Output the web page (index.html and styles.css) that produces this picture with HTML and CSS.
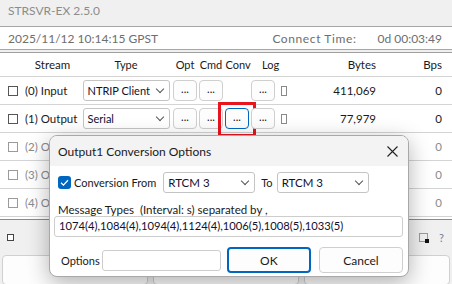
FILE: index.html
```html
<!DOCTYPE html>
<html lang="en">
<head>
    <meta charset="UTF-8">
    <title>STRSVR-EX 2.5.0</title>
    <link rel="stylesheet" href="styles.css">
</head>
<body>

<div class="app">
    <div class="titlebar">STRSVR-EX 2.5.0</div>

    <div class="status">
        <span class="clock">2025/11/12 10:14:15 GPST</span>
        <span class="conn-label">Connect Time:</span>
        <span class="conn-time">0d 00:03:49</span>
    </div>

    <div class="streams">
        <div class="row head">
            <span class="c-check"></span>
            <span class="c-name">Stream</span>
            <span class="c-type">Type</span>
            <span class="c-btn">Opt</span>
            <span class="c-btn">Cmd</span>
            <span class="c-btn">Conv</span>
            <span class="c-btn c-log">Log</span>
            <span class="c-ind"></span>
            <span class="c-bytes">Bytes</span>
            <span class="c-bps">Bps</span>
        </div>

        <div class="row">
            <span class="c-check"><span class="box"></span></span>
            <span class="c-name">(0) Input</span>
            <span class="c-type"><span class="select">NTRIP Client<i class="chev"></i></span></span>
            <span class="c-btn"><button class="dots">...</button></span>
            <span class="c-btn"><button class="dots">...</button></span>
            <span class="c-btn"></span>
            <span class="c-btn"><button class="dots">...</button></span>
            <span class="c-ind"><span class="led"></span></span>
            <span class="c-bytes">411,069</span>
            <span class="c-bps">0</span>
        </div>

        <div class="row">
            <span class="c-check"><span class="box"></span></span>
            <span class="c-name">(1) Output</span>
            <span class="c-type"><span class="select">Serial<i class="chev"></i></span></span>
            <span class="c-btn"><button class="dots">...</button></span>
            <span class="c-btn"><button class="dots">...</button></span>
            <span class="c-btn"><button class="dots focus">...</button><span class="redbox"></span></span>
            <span class="c-btn"><button class="dots">...</button></span>
            <span class="c-ind"><span class="led"></span></span>
            <span class="c-bytes">77,979</span>
            <span class="c-bps">0</span>
        </div>

        <!-- rows 2-4 sit mostly under the dialog -->
        <div class="row off">
            <span class="c-check"><span class="box"></span></span>
            <span class="c-name">(2) Ou</span>
            <span class="c-type"></span>
            <span class="c-bps wide">0</span>
        </div>

        <div class="row off">
            <span class="c-check"><span class="box"></span></span>
            <span class="c-name">(3) Ou</span>
            <span class="c-type"></span>
            <span class="c-bps wide">0</span>
        </div>

        <div class="row off">
            <span class="c-check"><span class="box"></span></span>
            <span class="c-name">(4) Ou</span>
            <span class="c-type"></span>
            <span class="c-bps wide">0</span>
        </div>
    </div>

    <div class="foot">
        <div class="foot-bar">
            <span class="mini-check"></span>
            <span class="spacer"></span>
            <svg class="trace" width="10" height="10" viewBox="0 0 10 10">
                <rect x="0.5" y="0.5" width="8" height="8" fill="none" stroke="#444" stroke-dasharray="1 1"/>
                <rect x="6" y="6" width="4" height="4" fill="#111"/>
            </svg>
            <span class="help">?</span>
        </div>
        <div class="foot-buttons">
            <button class="big"></button>
            <button class="big"></button>
            <button class="big"></button>
        </div>
    </div>

    <div class="dialog">
        <div class="dlg-title">
            <span>Output1 Conversion Options</span>
            <svg class="close" width="11" height="11" viewBox="0 0 11 11">
                <path d="M0.5 0.5 L10.5 10.5 M10.5 0.5 L0.5 10.5" stroke="#222" stroke-width="1.1"/>
            </svg>
        </div>
        <div class="dlg-body">
            <div class="conv-line">
                <span class="tick">
                    <svg width="13" height="13" viewBox="0 0 13 13">
                        <path d="M3 6.8 L5.4 9.1 L10 4.2" fill="none" stroke="#fff" stroke-width="1.3"/>
                    </svg>
                </span>
                <span class="conv-label">Conversion From</span>
                <span class="select wide">RTCM 3<i class="chev"></i></span>
                <span class="to-label">To</span>
                <span class="select wide">RTCM 3<i class="chev"></i></span>
            </div>
            <div class="msg-label">Message Types&nbsp; (Interval: s) separated by ,</div>
            <div class="field msg">1074(4),1084(4),1094(4),1124(4),1006(5),1008(5),1033(5)</div>
            <div class="opt-line">
                <span class="opt-label">Options</span>
                <span class="field opts"></span>
                <button class="btn ok">OK</button>
                <button class="btn">Cancel</button>
            </div>
        </div>
    </div>
</div>

</body>
</html>
```

FILE: styles.css
```css
body {
    margin: 0;
    background-color: #f0f0f0;
    font-family: 'Lato', sans-serif;
    font-size: 12px;
    color: #1a1a1a;
    overflow: hidden;
}
.app {
    position: relative;
    width: 452px;
    height: 284px;
    overflow: hidden;
}
.titlebar {
    height: 22px;
    line-height: 22px;
    padding: 0 0 4px 8px;
    color: #8c8c8c;
    border-bottom: 1px solid #a6a6a6;
}
.status {
    display: flex;
    align-items: center;
    height: 22px;
    padding: 0 10px 0 8px;
    background-color: white;
    border-bottom: 1px solid #a6a6a6;
    color: #6e6e6e;
}
.clock {
    flex: 1;
}
.conn-label {
    margin-right: 21px;
    letter-spacing: 0.6px;
}

/* stream table */
.streams {
    margin-top: 2px;
    background-color: white;
    border-top: 1px solid #a0a0a0;
    border-bottom: 1px solid #8a8a8a;
    padding-bottom: 2px;
    font-size: 11px;
}
.row {
    display: flex;
    align-items: center;
    height: 27px;
    border-bottom: 1px solid #d4d4d4;
}
.row.head {
    height: 23px;
}
.c-check { width: 22px; display: flex; justify-content: center; }
.c-name { width: 55px; padding-left: 3px; white-space: nowrap; overflow: hidden; font-size: 11.5px; }
.head .c-name { text-align: center; }
.c-type { width: 92px; display: flex; justify-content: center; }
.c-btn { width: 26px; display: flex; justify-content: center; position: relative; }
.head .c-btn:nth-child(6) { padding-left: 2px; width: 24px; }
.head .c-log { justify-content: flex-start; padding-left: 12px; width: 14px; }
.c-ind { width: 16px; display: flex; justify-content: center; }
.c-bytes { width: 84px; padding-right: 2px; text-align: right; font-size: 11.5px; }
.c-bps { width: 64px; text-align: right; font-size: 11.5px; }
.c-bps.wide { width: 270px; }

.box {
    width: 10px;
    height: 10px;
    border: 1px solid #555;
    box-sizing: border-box;
    margin-left: 3px;
}
.led {
    width: 6px;
    height: 10px;
    border: 1px solid #8a8a8a;
    box-sizing: border-box;
}
.select {
    position: relative;
    display: flex;
    align-items: center;
    box-sizing: border-box;
    width: 87px;
    height: 21px;
    padding-left: 4px;
    background-color: white;
    border: 1px solid #c4c4c4;
    border-radius: 3px;
    color: #101030;
    font-size: 11px;
}
.chev {
    position: absolute;
    right: 6px;
    top: 5px;
    width: 5px;
    height: 5px;
    border-right: 1px solid #555;
    border-bottom: 1px solid #555;
    transform: rotate(45deg);
}
.dots {
    width: 24px;
    height: 21px;
    padding: 0 0 4px;
    background-color: #fdfdfd;
    border: 1px solid #cfcfcf;
    border-radius: 4px;
    font-family: 'Lato', sans-serif;
    font-size: 11px;
    color: #1a1030;
}
.dots.focus {
    border-color: #0067c0;
}
.redbox {
    position: absolute;
    left: -6px;
    top: -6px;
    width: 32px;
    height: 29px;
    border: 3px solid #e8141e;
}
.off {
    color: #8a8a8a;
}
.off .box {
    border-color: #9a9a9a;
}

/* bottom area */
.foot-bar {
    display: flex;
    align-items: center;
    height: 35px;
    padding: 0 8px 0 7px;
}
.mini-check {
    width: 5px;
    height: 5px;
    border: 1px solid #444;
    background-color: white;
}
.spacer {
    flex: 1;
}
.help {
    margin-left: 10px;
    color: #6a7fa0;
    font-size: 11px;
}
.foot-buttons {
    display: flex;
    gap: 5px;
    padding: 0 2px;
}
.big {
    flex: 1;
    height: 30px;
    background-color: #fdfdfd;
    border: 1px solid #d0d0d0;
    border-radius: 4px;
}

/* conversion dialog */
.dialog {
    position: absolute;
    left: 49px;
    top: 135px;
    width: 360px;
    height: 142px;
    box-sizing: border-box;
    background-color: white;
    border: 1px solid #a8a8a8;
    border-radius: 8px;
    box-shadow: 0 6px 22px rgba(0, 0, 0, 0.3);
    overflow: hidden;
    z-index: 2;
    font-size: 11px;
}
.dlg-title {
    display: flex;
    align-items: center;
    justify-content: space-between;
    height: 30px;
    padding: 0 10px 0 8px;
    background-color: #f3f3f3;
    font-size: 12px;
    color: #1a1a1a;
}
.dlg-body {
    padding: 6px 5px 0 4px;
}
.conv-line {
    display: flex;
    align-items: center;
    padding-left: 4px;
}
.tick {
    display: flex;
    width: 13px;
    height: 13px;
    background-color: #0067c0;
    border-radius: 3px;
}
.conv-label {
    margin-left: 3px;
}
.select.wide {
    width: 92px;
    margin-left: 7px;
    font-size: 11.5px;
}
.to-label {
    margin-left: 6px;
    margin-right: 4px;
}
.to-label + .select.wide {
    margin-left: 0;
}
.msg-label {
    margin-top: 10px;
    padding-left: 4px;
    font-size: 11.5px;
}
.field {
    display: block;
    box-sizing: border-box;
    height: 21px;
    background-color: white;
    border: 1px solid #cdcdcd;
    border-radius: 3px;
    color: #101030;
    font-size: 11.2px;
}
.msg {
    width: 349px;
    padding: 2px 0 0 4px;
}
.opt-line {
    display: flex;
    align-items: center;
    margin-top: 10px;
    padding-left: 7px;
}
.opt-label {
    width: 42px;
}
.opts {
    width: 120px;
}
.btn {
    width: 85px;
    height: 26px;
    margin-left: 5px;
    background-color: #fdfdfd;
    border: 1px solid #cfcfcf;
    border-radius: 4px;
    font-family: 'Lato', sans-serif;
    font-size: 12px;
    color: #1a1a1a;
}
.btn.ok {
    margin-left: 6px;
    margin-right: 3px;
    border: 2px solid #0067c0;
}
```
